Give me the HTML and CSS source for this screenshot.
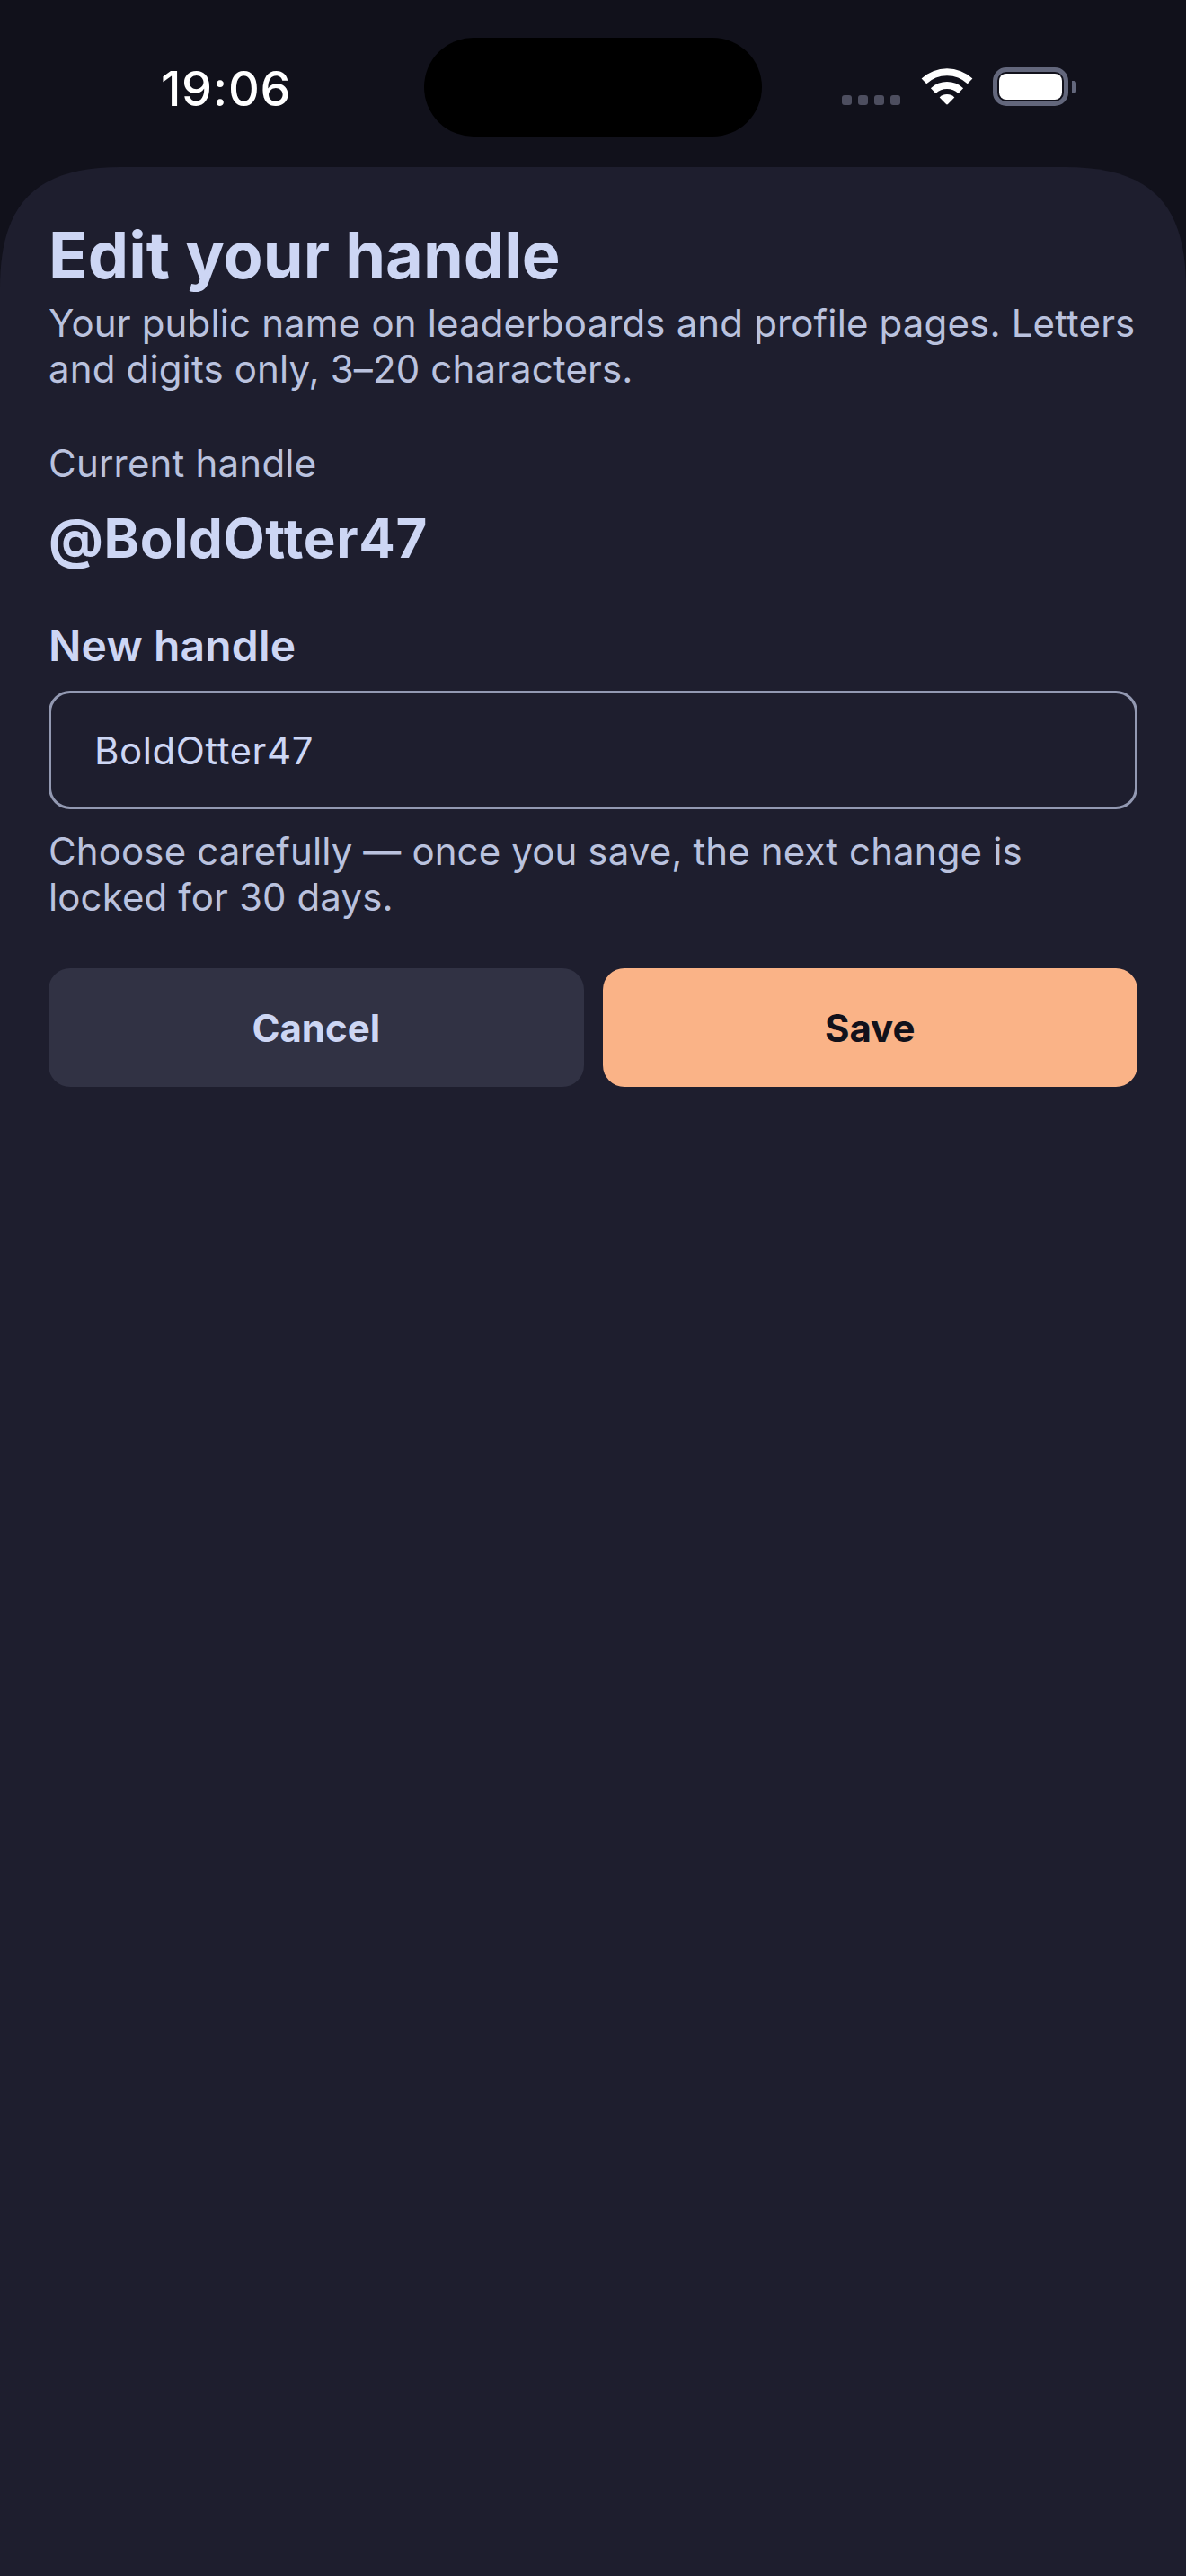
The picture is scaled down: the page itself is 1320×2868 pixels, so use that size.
FILE: index.html
```html
<!DOCTYPE html>
<html lang="en">
<head>
<meta charset="utf-8">
<title>Edit your handle</title>
<link rel="stylesheet" href="styles.css">
</head>
<body>
<div class="status-bar">
  <div class="time">19:06</div>
  <div class="island"></div>
  <div class="status-icons">
    <div class="cell"><i></i><i></i><i></i><i></i></div>
    <svg class="wifi" viewBox="0 0 58 42" width="58" height="42">
      <path d="M0.6 12.4A42 42 0 0 1 57.4 12.4L51.8 18.3A33 33 0 0 0 6.2 18.3Z"/>
      <path d="M10.9 23.3A26 26 0 0 1 47.1 23.3L41.5 29A18 18 0 0 0 16.5 29Z"/>
      <path d="M20.7 33.4A12 12 0 0 1 37.3 33.4L30.2 40.8Q29 42 27.8 40.8Z"/>
    </svg>
    <div class="battery">
      <div class="battery-body"><div class="battery-fill"></div></div>
      <div class="battery-nub"></div>
    </div>
  </div>
</div>
<main class="sheet">
  <h1 class="title">Edit your handle</h1>
  <p class="subtitle">Your public name on leaderboards and profile pages. Letters and digits only, 3–20 characters.</p>
  <div class="current-label">Current handle</div>
  <div class="current-value">@BoldOtter47</div>
  <label class="field-label" for="handle">New handle</label>
  <input class="field" id="handle" type="text" value="BoldOtter47">
  <p class="helper">Choose carefully — once you save, the next change is locked for 30 days.</p>
  <div class="actions">
    <button class="btn btn-cancel" type="button">Cancel</button>
    <button class="btn btn-save" type="button">Save</button>
  </div>
</main>
</body>
</html>
```
FILE: styles.css
```css
* { box-sizing: border-box; }
html, body { margin: 0; padding: 0; }
body {
  width: 1320px;
  height: 2868px;
  overflow: hidden;
  background: #11111b;
  font-family: Inter, "Noto Sans", sans-serif;
  color: #cdd6f4;
  display: flex;
  flex-direction: column;
}
.status-bar {
  height: 186px;
  flex: none;
  display: grid;
  grid-template-columns: 472px 376px 1fr;
}
.time {
  padding: 66px 0 0 179px;
  font-size: 54px;
  line-height: 65px;
  font-weight: 500;
  letter-spacing: 0.7px;
  color: #fff;
}
.island {
  margin-top: 42px;
  height: 110px;
  border-radius: 55px;
  background: #000;
}
.status-icons {
  display: flex;
  align-items: flex-start;
  padding: 75px 0 0 89px;
}
.cell {
  display: flex;
  gap: 7px;
  margin-top: 31px;
  margin-right: 23px;
}
.cell i {
  width: 11px;
  height: 11px;
  border-radius: 3px;
  background: #4d4e5f;
}
.wifi { fill: #fff; display: block; margin-right: 22px; }
.battery {
  display: flex;
  align-items: center;
  gap: 4px;
  height: 43px;
}
.battery-body {
  width: 84px;
  height: 43px;
  border: 5px solid #63677c;
  border-radius: 15px;
  padding: 2px;
}
.battery-fill {
  height: 100%;
  border-radius: 8px;
  background: #fff;
}
.battery-nub {
  width: 5px;
  height: 14px;
  border-radius: 0 3px 3px 0;
  background: #63677c;
}
.sheet {
  flex: 1;
  background: #1e1e2e;
  clip-path: path("M0 135C0 40 40 0 135 0H1185C1280 0 1320 40 1320 135V2682H0Z");
  padding: 54px 54px 0;
  display: flex;
  flex-direction: column;
}
.title {
  margin: 0;
  font-size: 72px;
  line-height: 87px;
  font-weight: 700;
  letter-spacing: 0.07px;
}
.subtitle {
  margin: 7px 0 0;
  font-size: 42px;
  line-height: 51px;
  letter-spacing: 0.15px;
  color: #bac2de;
}
.current-label {
  margin-top: 54px;
  font-size: 42px;
  line-height: 51px;
  letter-spacing: 0.2px;
  color: #bac2de;
}
.current-value {
  margin-top: 22px;
  font-size: 60px;
  line-height: 73px;
  font-weight: 700;
  letter-spacing: 0.6px;
}
.field-label {
  display: block;
  margin-top: 54px;
  font-size: 48px;
  line-height: 58px;
  font-weight: 600;
  letter-spacing: 0.15px;
}
.field {
  display: block;
  width: 100%;
  height: 132px;
  margin-top: 21px;
  padding: 0 48px;
  border: 3px solid #9399b2;
  border-radius: 24px;
  background: transparent;
  outline: none;
  font-family: inherit;
  font-size: 42px;
  letter-spacing: 0.55px;
  color: #cdd6f4;
}
.helper {
  margin: 21px 0 0;
  font-size: 42px;
  line-height: 51px;
  letter-spacing: 0.12px;
  color: #bac2de;
}
.actions {
  display: flex;
  gap: 21px;
  margin-top: 54px;
}
.btn {
  flex: 1;
  height: 132px;
  border: 0;
  border-radius: 24px;
  font-family: inherit;
  font-size: 42px;
  font-weight: 700;
}
.btn-cancel { background: #313244; color: #cdd6f4; }
.btn-save { background: #fab387; color: #11111b; }
```
